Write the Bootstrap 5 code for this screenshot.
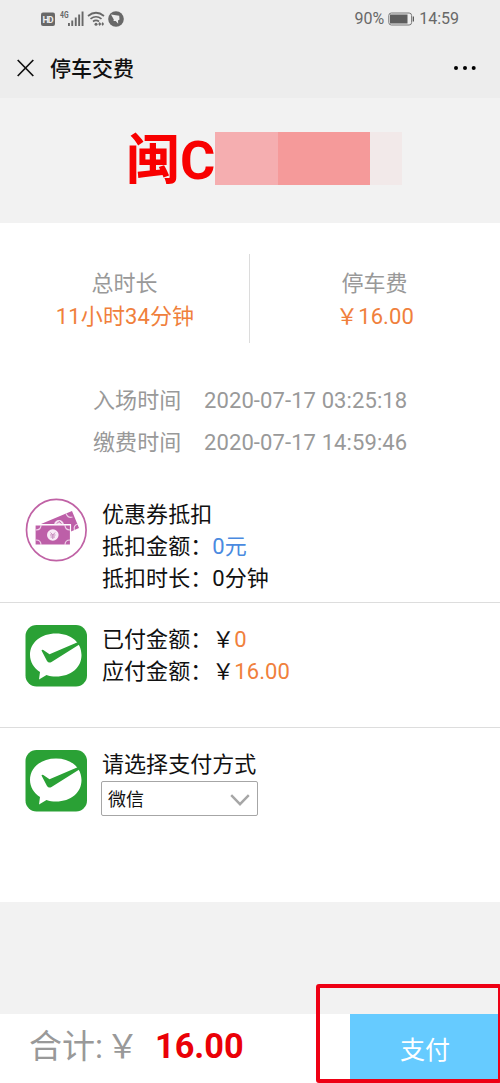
<!DOCTYPE html>
<html lang="zh-CN">
<head>
<meta charset="utf-8">
<meta name="viewport" content="width=device-width, initial-scale=1">
<title>停车交费</title>
<link href="https://cdn.jsdelivr.net/npm/bootstrap@5.3.0/dist/css/bootstrap.min.css" rel="stylesheet">
<style>
body{font-family:Roboto,"Noto Sans CJK SC",sans-serif;font-size:22px;line-height:32px;color:#111;background:#f2f2f2;height:1083px;overflow:hidden}
svg{display:block;flex:none}
.top-area{background:#ededed;height:98px}
.status-bar{height:38px;padding:0 41px;font-size:16px;line-height:38px;color:#686868}
.title-bar{height:60px;padding:0 23px 0 17px;font-size:21px;color:#111}
.title-text{font-weight:500;line-height:60px;padding-top:1px}
.plate{height:125px;padding:34px 98px 0 126px}
.plate-no{font-size:54px;line-height:57px;font-weight:700;color:#f80000;width:89px;white-space:nowrap}
.mask{height:53px}
.summary{height:154px;padding-top:31px}
.summary-cell{height:89px;padding-top:13px;line-height:33px}
.summary-cell:first-child{width:249px}
.summary-cell+.summary-cell{border-left:1px solid #dcdcdc}
.summary-cell .orange{letter-spacing:.1px;padding-left:1px}
.grey{color:#999}
.orange{color:#f0803c}
.blue{color:#4a8ae0}
.times{height:100px;padding:3px 0 0 93px;line-height:42px;letter-spacing:.1px}
.times span{width:111px}
.entry{height:125px;padding:21px 0 0 25px;border-top:1px solid #ddd;letter-spacing:.05px}
.entry-icon{width:77px;padding-top:1px}
.pay-select{width:157px;height:35px;border:1.5px solid #a6a6a6;border-radius:2px;font-size:18px;padding:2px 7px 0 6px;margin-left:-1px}
.footer-bar{height:69px;padding-left:29px}
.total-label{font-size:33px;line-height:65px;width:126px;white-space:nowrap}
.total-label span{margin-left:3px}
.total-num{font-size:34.3px;line-height:65px;font-weight:700;color:#ea0007}
.pay-btn{width:150px;height:69px;background:#66cbff;color:#fff;font-size:25px;line-height:73px}
.highlight{left:316px;top:984px;width:186px;height:99px;border:4px solid #ee0014;border-radius:3px}
</style>
</head>
<body class="position-relative">
<svg width="0" height="0" class="position-absolute"><defs>
<symbol id="wepay" viewBox="0 0 62 62"><rect x=".5" width="61.500" height="61.500" rx="11" fill="#2aa135"/><path fill="#fff" d="M31 8.500C16 8.500 5 17.500 5 30c0 7 4 13 10 17l-1 7.500 7.500-4.500c3 1 6 1.500 9.500 1.500 15 0 25.500-9 25.500-21.500S46 8.500 31 8.500z"/><path fill="#2aa135" d="M16.500 25.500q.5-1.200 1.800-.6l6.200 4.300 31-13.200v2.800L26.500 37q-2.800 1.500-4.500-1z"/></symbol>
</defs></svg>

<header class="top-area">
  <div class="status-bar d-flex justify-content-between align-items-center">
    <svg width="84" height="38" viewBox="0 0 84 38" fill="#686868">
      <rect y="12.500" width="14" height="13.500" rx="2"/><text x="7" y="22.600" font-size="9" font-weight="700" text-anchor="middle" fill="#eee" textLength="11">HD</text>
      <text x="19" y="18" font-size="8.500" font-weight="700" textLength="8.500" lengthAdjust="spacingAndGlyphs">4G</text>
      <path d="M27 23h1.900v3H27zm3.300-2.500h1.900V26h-1.900zm3.500-3h1.900V26h-1.900zm3.400-3h1.900V26h-1.900zM40.600 11.500h1.900V26h-1.900z"/>
      <g fill="none" stroke="#686868" stroke-width="1.700"><path d="M47 16q8-6.500 16 0M49.500 18.900q5.500-4.300 11 0M52 21.500q3-2.200 6 0"/></g><circle cx="55" cy="24.300" r="1.500"/><path d="m57.200 24 1.500-2 1.500 2-1.500 2zm3.200 0 1.300-2 1.300 2-1.300 2z"/>
      <circle cx="75" cy="19" r="7.800"/><path fill="#eee" d="m70 14.500 8.200 1.300.3 3.600-1.500 1 .2 3.300-2.500-2.800-2.200.2.300-1.500z"/>
    </svg>
    <div class="d-flex align-items-center">
      <span>90%</span>
      <svg class="ms-1" width="27" height="14" viewBox="0 0 27 14"><rect x=".8" y="1" width="22.800" height="12" rx="2.500" fill="none" stroke="#777"/><path fill="#5d5d5d" d="M2 2.500h17.500v9H2zM24.700 4.500H26v5h-1.300z"/></svg>
      <span class="ms-1">14:59</span>
    </div>
  </div>
  <div class="title-bar d-flex align-items-center">
    <svg width="17" height="18" viewBox="0 0 17 18"><path d="m.7 1 15.600 16m0-16L.7 17" stroke="#111" stroke-width="1.700"/></svg>
    <span class="title-text ms-3">停车交费</span>
    <svg class="ms-auto" width="24" height="6" viewBox="0 0 24 6"><circle cx="3" cy="3" r="2"/><circle cx="12" cy="3" r="2"/><circle cx="20.700" cy="3" r="2"/></svg>
  </div>
</header>

<section class="plate d-flex">
  <div class="plate-no">闽C</div>
  <svg class="mask" width="187" height="53"><path fill="#f5aeb0" d="M0 0h63v53H0z"/><path fill="#f59a9a" d="M63 0h92v53H63z"/><path fill="#f2e9e9" d="M155 0h32v53h-32z"/></svg>
</section>

<main class="bg-white">
  <section class="summary d-flex text-center">
    <div class="summary-cell"><div class="grey">总时长</div><div class="orange">11小时34分钟</div></div>
    <div class="summary-cell w-50"><div class="grey">停车费</div><div class="orange">￥16.00</div></div>
  </section>
  <section class="times grey">
    <div class="d-flex"><span>入场时间</span>2020-07-17 03:25:18</div>
    <div class="d-flex"><span>缴费时间</span>2020-07-17 14:59:46</div>
  </section>
  <section class="entry d-flex border-top-0">
    <div class="entry-icon pt-0">
      <svg width="62" height="64" viewBox="0 0 62 64"><ellipse cx="31.300" cy="32" rx="29.800" ry="30.700" fill="#fff" stroke="#c062a5" stroke-width="1.700"/>
        <path fill="#bd5fa8" d="M16 26 47 13l7 17-8 3.500V26z"/>
        <path fill="none" stroke="#eed0e8" stroke-width="1.200" d="M41 15.500q2 5 6.500 3.500M53 26q-5 1.500-3.500 6"/>
        <path fill="#f4dff0" d="M29 26.500q1-4.500 5-4.500 4 .2 5 4.500z"/><path d="m32 25.500 2-2 2.500 2" fill="none" stroke="#bd5fa8"/>
        <path fill="#bd5fa8" stroke="#fff" stroke-width="1.200" d="M10 27h35.500v20H10z"/>
        <path fill="none" stroke="#f0d3ea" stroke-width="1.200" d="M11 32q5 0 5-5M40 27q0 5 5 5M11 42q5 0 5 5M40 47q0-5 5-5"/>
        <circle cx="27.800" cy="37" r="5.800" fill="#f8eaf6"/><path d="m25.500 34.500 2.300 2.500 2.300-2.500M25 37h5.500M25.500 39h4.500M27.800 37v4" fill="none" stroke="#c78cbc"/>
      </svg>
    </div>
    <div class="coupon-text" style="padding-top:1px"><div>优惠券抵扣</div><div>抵扣金额：<span class="blue">0元</span></div><div>抵扣时长：0分钟</div></div>
  </section>
  <section class="entry d-flex">
    <div class="entry-icon"><svg width="62" height="62"><use href="#wepay"/></svg></div>
    <div><div>已付金额：￥<span class="orange">0</span></div><div>应付金额：￥<span class="orange">16.00</span></div></div>
  </section>
  <section class="entry d-flex" style="height:175px">
    <div class="entry-icon"><svg width="62" height="62"><use href="#wepay"/></svg></div>
    <div>
      <div>请选择支付方式</div>
      <div class="pay-select d-flex align-items-center justify-content-between"><span>微信</span>
        <svg width="20" height="12" viewBox="0 0 20 12"><path d="m1.200 1.200 8.800 9 8.800-9" fill="none" stroke="#a6a6a6" stroke-width="2.400"/></svg></div>
    </div>
  </section>
</main>

<footer class="footer-bar bg-white d-flex fixed-bottom">
  <div class="total-label grey">合计:<span>￥</span></div>
  <div class="total-num">16.00</div>
  <button type="button" class="pay-btn btn rounded-0 border-0 p-0 ms-auto">支付</button>
</footer>
<div class="highlight position-absolute" style="z-index:1040"></div>
<script src="https://cdn.jsdelivr.net/npm/bootstrap@5.3.0/dist/js/bootstrap.bundle.min.js"></script>
</body>
</html>
